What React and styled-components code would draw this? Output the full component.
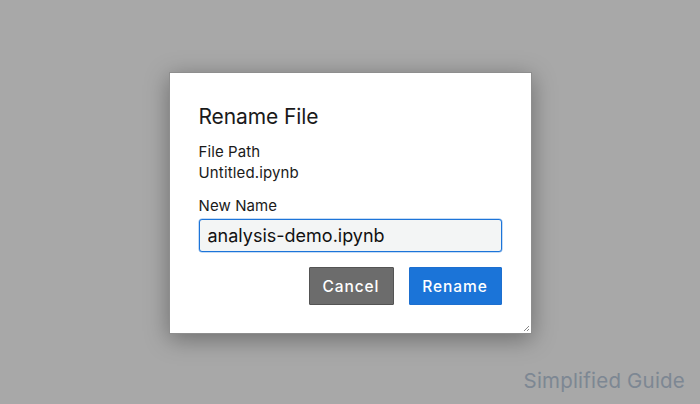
import React from "react";
import styled, { createGlobalStyle } from "styled-components";

const Global = createGlobalStyle`
  html, body { margin: 0; padding: 0; }
  body {
    width: 700px;
    height: 404px;
    background: #a8a8a8;
    font-family: Inter, "Liberation Sans", Arial, sans-serif;
    overflow: hidden;
  }
`;

const Backdrop = styled.div`
  position: relative;
  width: 700px;
  height: 404px;
  display: flex;
  justify-content: center;
  padding-top: 72px;
  box-sizing: border-box;
`;

const Dialog = styled.div`
  position: relative;
  width: 363px;
  height: 262px;
  box-sizing: border-box;
  background: #fff;
  border: 1px solid #8e8e8e;
  box-shadow: 0 5px 22px rgba(0, 0, 0, 0.35);
  padding: 30px 29px 0 29px;
  display: flex;
  flex-direction: column;
  color: #1a1a1a;
`;

const Title = styled.h2`
  margin: 0;
  font-size: 21px;
  font-weight: 400;
  line-height: 28px;
  letter-spacing: -0.1px;
`;

const Field = styled.div`
  margin-top: ${(p) => p.$gap}px;
  display: flex;
  flex-direction: column;
`;

const Label = styled.div`
  font-size: 15px;
  line-height: 21px;
  letter-spacing: 0.1px;
`;

const Value = styled.div`
  font-size: 15px;
  line-height: 21px;
  letter-spacing: 0.15px;
`;

const Input = styled.input`
  margin-top: 3px;
  width: 303px;
  height: 33px;
  box-sizing: border-box;
  border: 1px solid #1c74d9;
  box-shadow: 0 0 0 0.5px rgba(28, 116, 217, 0.5);
  border-radius: 3px;
  background: #f3f5f5;
  padding: 0 8px;
  font-family: inherit;
  font-size: 18px;
  color: #111;
  outline: none;
`;

const Actions = styled.div`
  margin-top: 15px;
  display: flex;
  justify-content: flex-end;
  gap: 15px;
`;

const Button = styled.button`
  height: 38px;
  width: ${(p) => p.$w}px;
  box-sizing: border-box;
  border: 1px solid ${(p) => (p.$primary ? "#1d6fcf" : "#545454")};
  background: ${(p) => (p.$primary ? "#1b74d8" : "#6c6c6c")};
  color: #fff;
  font-family: inherit;
  font-size: 15.5px;
  font-weight: 500;
  letter-spacing: 0.9px;
  border-radius: 1px;
  padding: 0;
`;

const Grip = styled.svg`
  position: absolute;
  right: 1px;
  bottom: 1px;
`;

const Watermark = styled.div`
  position: absolute;
  right: 15px;
  bottom: 11px;
  font-size: 20.5px;
  color: #7d8793;
  letter-spacing: 0.2px;
`;

export default function App() {
  return (
    <>
      <Global />
      <Backdrop>
        <Dialog>
          <Title>Rename File</Title>
          <Field $gap={10}>
            <Label>File Path</Label>
            <Value>Untitled.ipynb</Value>
          </Field>
          <Field $gap={12}>
            <Label>New Name</Label>
            <Input defaultValue="analysis-demo.ipynb" />
          </Field>
          <Actions>
            <Button $w={85}>Cancel</Button>
            <Button $primary $w={93}>Rename</Button>
          </Actions>
          <Grip width="7" height="7" viewBox="0 0 7 7">
            <path d="M6 1L1 6M6 4L4 6" stroke="#888" strokeWidth="1" />
          </Grip>
        </Dialog>
        <Watermark>Simplified Guide</Watermark>
      </Backdrop>
    </>
  );
}
